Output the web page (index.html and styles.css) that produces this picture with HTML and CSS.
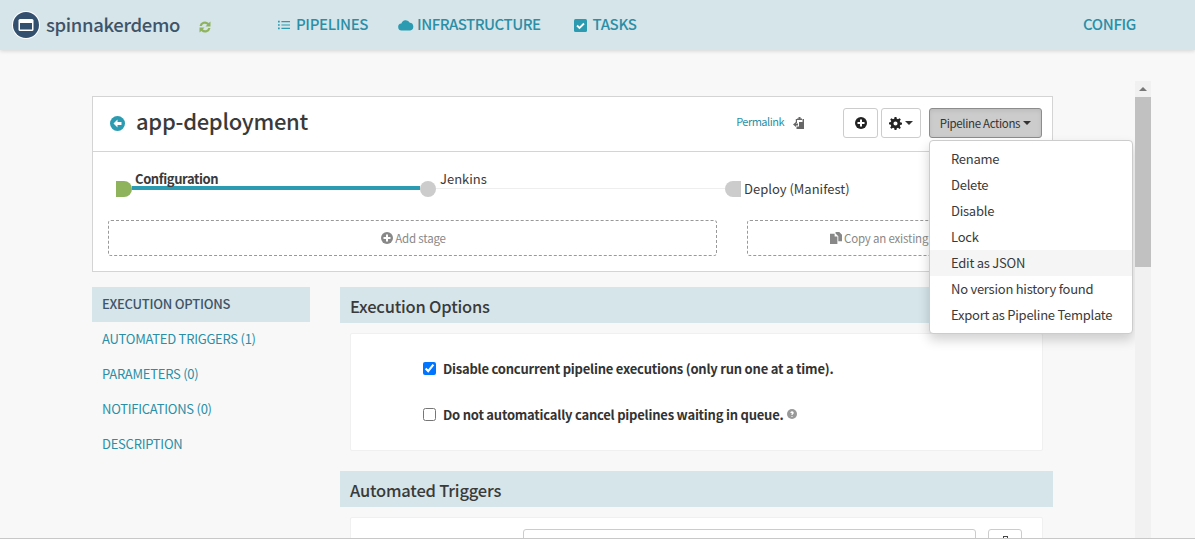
FILE: index.html
```html
<!DOCTYPE html>
<html lang="en">
<head>
    <meta charset="UTF-8">
    <meta name="viewport" content="width=device-width, initial-scale=1.0">
    <title>spinnakerdemo</title>
    <link rel="stylesheet" href="styles.css">
</head>
<body>

    <header class="topbar">
        <div class="brand">
            <span class="brand-logo">
                <svg viewBox="0 0 28 28" width="28" height="28"><circle cx="14" cy="14" r="13" fill="#34506f"/><rect x="6.5" y="8" width="15" height="12" rx="1.5" fill="#fff"/><rect x="8" y="12" width="12" height="6.5" fill="#34506f"/></svg>
            </span>
            <span class="brand-name">spinnakerdemo</span>
            <svg class="brand-sync" viewBox="0 0 14 14" width="14" height="14"><path d="M1.500 6a5.500 5.500 0 0 1 9.200-3L12.500 1.500v5H7.500l1.700-1.700A3.300 3.300 0 0 0 3.700 6zM12.500 8a5.500 5.500 0 0 1-9.200 3L1.500 12.500v-5h5L4.800 9.200A3.300 3.300 0 0 0 10.300 8z" fill="#8fb35c"/></svg>
        </div>
        <nav class="nav">
            <a class="nav-link nav-pipelines">
                <svg viewBox="0 0 14 14" width="12" height="12"><path d="M0 2h2v2H0zM4 2.300h10v1.400H4zM0 6h2v2H0zM4 6.300h10v1.400H4zM0 10h2v2H0zM4 10.300h10v1.400H4z" fill="#2a9bb0"/></svg>
                PIPELINES
            </a>
            <a class="nav-link nav-infra">
                <svg viewBox="0 0 16 12" width="16" height="12"><path d="M4 11.500a3.500 3.500 0 0 1-.6-7A4.500 4.500 0 0 1 11.800 3.800 3.900 3.900 0 0 1 12.200 11.500z" fill="#2a9bb0"/></svg>
                INFRASTRUCTURE
            </a>
            <a class="nav-link nav-tasks">
                <svg viewBox="0 0 13 13" width="13" height="13"><rect width="13" height="13" rx="1.500" fill="#2a9bb0"/><path d="M3 6.500l2.500 2.500L10 4.500" fill="none" stroke="#fff" stroke-width="1.800"/></svg>
                TASKS
            </a>
        </nav>
        <a class="nav-link nav-config">CONFIG</a>
    </header>

    <div class="pane">
        <main class="content">
            <section class="card">
                <div class="card-head">
                    <svg class="back-icon" viewBox="0 0 15 15" width="15" height="15"><circle cx="7.500" cy="7.500" r="7.500" fill="#2a9bb0"/><path d="M7.500 3.500L3.500 7.500l4 4V9h4V6h-4z" fill="#fff"/></svg>
                    <h1 class="pipeline-name">app-deployment</h1>
                    <a class="permalink">Permalink</a>
                    <svg class="clip-icon" viewBox="0 0 12 12" width="12" height="12"><path d="M4 1.500h1.500V0h2v1.500H9V3H4zM3.500 2H2.800v4H4V2zM9.500 2h1.500v10H3.500V9.500H6V5h3.500z" fill="#666"/><path d="M0 7.500L3 5v1.500h2v2H3V10z" fill="#666"/></svg>
                    <button class="btn btn-add">
                        <svg viewBox="0 0 12 12" width="12" height="12"><circle cx="6" cy="6" r="6" fill="#222"/><path d="M5 2.500h2V5h2.500v2H7v2.500H5V7H2.500V5H5z" fill="#fff"/></svg>
                    </button>
                    <button class="btn btn-gear">
                        <svg viewBox="0 0 14 14" width="13" height="13"><path d="M6 0h2l.4 2 1.300.5L11.400 1.400l1.300 1.300-1.100 1.700.5 1.300 2 .4v2l-2 .4-.5 1.300 1.100 1.700-1.300 1.300-1.700-1.100-1.300.5L8 14H6l-.4-2-1.300-.5-1.700 1.100-1.300-1.300 1.100-1.700-.5-1.300-2-.4v-2l2-.4.5-1.300L1.300 2.700l1.300-1.300 1.700 1.100L5.600 2zM7 4.800a2.200 2.200 0 1 0 0 4.400 2.200 2.200 0 0 0 0-4.400z" fill="#222" fill-rule="evenodd"/></svg>
                        <span class="caret"></span>
                    </button>
                    <button class="btn btn-actions">Pipeline Actions <span class="caret"></span></button>
                </div>

                <div class="graph">
                    <span class="link link-active"></span>
                    <span class="link link-idle"></span>
                    <span class="node node-first"></span>
                    <span class="node node-mid"></span>
                    <span class="node node-last"></span>
                    <span class="stage-label stage-config">Configuration</span>
                    <span class="stage-label stage-jenkins">Jenkins</span>
                    <span class="stage-label stage-deploy">Deploy (Manifest)</span>
                </div>

                <div class="stage-tools">
                    <div class="dashed dashed-add">
                        <svg viewBox="0 0 12 12" width="12" height="12"><circle cx="6" cy="6" r="6" fill="#888"/><path d="M5 2.500h2V5h2.500v2H7v2.500H5V7H2.500V5H5z" fill="#fff"/></svg>
                        <span>Add stage</span>
                    </div>
                    <div class="dashed dashed-copy">
                        <svg viewBox="0 0 13 13" width="12" height="12"><path d="M0 2h5v3h3v8H0z" fill="#888"/><path d="M6 0h4l3 3v7H9V4.500L6 1.500z" fill="#888"/></svg>
                        <span>Copy an existing stage</span>
                    </div>
                </div>
            </section>

            <div class="columns">
                <aside class="sidenav">
                    <a class="side-link side-active">EXECUTION OPTIONS</a>
                    <a class="side-link">AUTOMATED TRIGGERS (1)</a>
                    <a class="side-link">PARAMETERS (0)</a>
                    <a class="side-link">NOTIFICATIONS (0)</a>
                    <a class="side-link">DESCRIPTION</a>
                </aside>
                <div class="sections">
                    <h2 class="section-head">Execution Options</h2>
                    <div class="panel panel-options">
                        <label class="option"><input type="checkbox" checked> Disable concurrent pipeline executions (only run one at a time).</label>
                        <label class="option"><input type="checkbox"> Do not automatically cancel pipelines waiting in queue.
                            <svg class="help-icon" viewBox="0 0 10 10" width="10" height="10"><circle cx="5" cy="5" r="5" fill="#999"/><path d="M3.300 3.800a1.700 1.500 0 1 1 2.500 1.400L5.500 6H4.500V4.800l.8-.5-.5-.4-.5.400zM4.500 7h1v1h-1z" fill="#fff"/></svg>
                        </label>
                    </div>
                    <h2 class="section-head section-gap">Automated Triggers</h2>
                    <div class="panel panel-triggers">
                        <div class="trigger-input"></div>
                        <div class="trigger-btn"><span class="trigger-glyph"></span></div>
                    </div>
                </div>
            </div>

            <!-- menu open over the card -->
            <ul class="menu">
                <li>Rename</li>
                <li>Delete</li>
                <li>Disable</li>
                <li>Lock</li>
                <li class="menu-hover">Edit as JSON</li>
                <li>No version history found</li>
                <li>Export as Pipeline Template</li>
            </ul>
        </main>
        <div class="scrollbar">
            <div class="scroll-up"><span class="scroll-arrow"></span></div>
            <div class="scroll-thumb"></div>
        </div>
    </div>

    <div class="bottom-line"></div>

</body>
</html>
```

FILE: styles.css
```css
* {
    box-sizing: border-box;
}
html, body {
    height: 100%;
}
body {
    margin: 0;
    height: 540px;
    overflow: hidden;
    display: flex;
    flex-direction: column;
    background-color: #f8f8f8;
    color: #3a3a3a;
    font-family: "Noto Sans CJK SC", "Noto Sans", sans-serif;
    font-size: 14px;
}

/* top bar */
.topbar {
    flex: none;
    height: 50px;
    display: flex;
    align-items: center;
    background-color: #d5e5ea;
    box-shadow: 0 1px 4px rgba(0, 0, 0, 0.15);
    padding-left: 12px;
}
.brand {
    width: 266px;
    display: flex;
    align-items: center;
}
.brand-logo {
    width: 28px;
    height: 28px;
    border-radius: 50%;
    background-color: #fff;
    display: flex;
}
.brand-name {
    margin-left: 6px;
    margin-bottom: 2px;
    font-size: 18.5px;
    font-weight: 500;
    letter-spacing: -0.35px;
    color: #3f5468;
}
.brand-sync {
    margin-left: 18px;
    margin-top: 3px;
}
.nav {
    display: flex;
    flex: 1;
    gap: 30px;
}
.nav-link {
    display: flex;
    align-items: center;
    gap: 6px;
    font-size: 15px;
    font-weight: 500;
    letter-spacing: -0.35px;
    color: #2a8fa6;
    padding-bottom: 3px;
}
.nav-infra {
    gap: 3px;
    letter-spacing: -0.5px;
}
.nav-tasks {
    margin-left: 3px;
}
.nav-link svg {
    margin-top: 3px;
}
.nav-config {
    margin-right: 59px;
}

/* scrolling area */
.pane {
    flex: 1;
    min-height: 0;
    display: flex;
    padding-top: 31px;
    width: 1151px;
}
.content {
    position: relative;
    flex: 1;
    padding: 15px 82px 0 92px;
    overflow: hidden;
}
.scrollbar {
    width: 16px;
    background-color: #f1f1f1;
}
.scroll-up {
    height: 16px;
    display: flex;
    align-items: center;
    justify-content: center;
}
.scroll-arrow {
    border-bottom: 4px solid #777;
    border-left: 4px solid transparent;
    border-right: 4px solid transparent;
}
.scroll-thumb {
    height: 170px;
    background-color: #c1c1c1;
}
.bottom-line {
    flex: none;
    height: 2px;
    border-top: 1px solid #c8c8c8;
    background-color: #fff;
}

/* pipeline card */
.card {
    height: 176px;
    background-color: #fff;
    border: 1px solid #d4d4d4;
}
.card-head {
    height: 55px;
    display: flex;
    align-items: center;
    padding: 0 0 2px 17px;
    border-bottom: 1px solid #d4d4d4;
}
.pipeline-name {
    margin: 0 0 6px 11px;
    font-size: 22px;
    font-weight: 500;
    letter-spacing: -0.3px;
    flex: 1;
}
.permalink {
    margin-bottom: 4px;
    font-size: 11px;
    letter-spacing: -0.5px;
    color: #2a8fa6;
}
.clip-icon {
    margin-left: 9px;
    margin-right: 38px;
}
.btn {
    height: 30px;
    padding: 0;
    border: 1px solid #ccc;
    border-radius: 3px;
    background-color: #fff;
    font-family: inherit;
    font-size: 11.5px;
    letter-spacing: -0.35px;
    color: #333;
    display: flex;
    align-items: center;
    justify-content: center;
    gap: 3px;
}
.btn-add {
    width: 35px;
}
.btn-gear {
    width: 40px;
    margin-left: 3px;
}
.btn-actions {
    width: 113px;
    margin-left: 8px;
    margin-right: 10px;
    background-color: #ccc;
    border-color: #8c8c8c;
    box-shadow: inset 0 2px 4px rgba(0, 0, 0, 0.08);
}
.caret {
    display: inline-block;
    border-top: 4px solid #333;
    border-left: 4px solid transparent;
    border-right: 4px solid transparent;
}

/* stage graph: nodes sit on a free canvas */
.graph {
    position: relative;
    height: 68px;
}
.node {
    position: absolute;
    top: 29px;
    width: 16px;
    height: 16px;
    background-color: #ccc;
}
.node-first {
    left: 23px;
    background-color: #8fb35c;
    border-radius: 0 8px 8px 0;
}
.node-mid {
    left: 327px;
    border-radius: 50%;
}
.node-last {
    left: 632px;
    border-radius: 8px 0 0 8px;
}
.link {
    position: absolute;
}
.link-active {
    left: 39px;
    width: 288px;
    top: 34px;
    height: 4px;
    background-color: #2a9bb0;
}
.link-idle {
    left: 343px;
    width: 289px;
    top: 36px;
    height: 1px;
    background-color: #eee;
}
.stage-label {
    position: absolute;
    font-size: 13px;
    line-height: 18px;
    white-space: nowrap;
}
.stage-config {
    left: 42px;
    top: 18px;
    font-weight: 700;
    letter-spacing: -0.4px;
}
.stage-jenkins {
    left: 347px;
    top: 18px;
}
.stage-deploy {
    left: 651px;
    top: 28px;
}
.stage-tools {
    display: flex;
    gap: 30px;
    padding-left: 15px;
}
.dashed {
    width: 609px;
    height: 36px;
    padding-bottom: 1px;
    border: 1px dashed #999;
    border-radius: 3px;
    display: flex;
    align-items: center;
    justify-content: center;
    gap: 2px;
    font-size: 11.5px;
    letter-spacing: -0.2px;
    color: #888;
}
.dashed-add {
    padding-left: 2px;
}
.dashed-copy {
    width: 290px;
    padding-left: 4px;
}

/* lower columns */
.columns {
    display: flex;
    margin-top: 15px;
}
.sidenav {
    width: 218px;
    margin-right: 30px;
    display: flex;
    flex-direction: column;
}
.side-link {
    height: 35px;
    padding: 0 0 2px 10px;
    display: flex;
    align-items: center;
    font-size: 13px;
    letter-spacing: -0.25px;
    color: #2a8fa6;
}
.side-active {
    background-color: #d5e5ea;
    color: #3f5468;
    font-weight: 500;
}
.sections {
    flex: 1;
}
.section-head {
    margin: 0;
    height: 36px;
    padding: 1px 0 0 10px;
    display: flex;
    align-items: center;
    background-color: #d5e5ea;
    font-size: 16.5px;
    font-weight: 500;
    letter-spacing: -0.2px;
    color: #3a3a3a;
}
.section-gap {
    margin-top: 20px;
}
.panel {
    margin: 10px 10px 0;
    background-color: #fff;
    border: 1px solid #f0f0f0;
    border-radius: 2px;
}
.panel-options {
    height: 118px;
    padding: 25px 0 0 72px;
    display: flex;
    flex-direction: column;
    gap: 28px;
}
.option {
    height: 18px;
    display: flex;
    align-items: center;
    gap: 7px;
    font-size: 13px;
    font-weight: 700;
    letter-spacing: -0.22px;
    color: #333;
}
.option input {
    margin: 0;
    width: 13px;
    height: 13px;
}
.help-icon {
    margin-left: -4px;
}
.panel-triggers {
    height: 60px;
    display: flex;
    gap: 12px;
    padding: 11px 0 0 172px;
}
.trigger-input {
    width: 453px;
    height: 34px;
    border: 1px solid #ccc;
    border-radius: 3px;
}
.trigger-btn {
    width: 34px;
    height: 34px;
    padding-top: 6px;
    border: 1px solid #ccc;
    border-radius: 3px;
    display: flex;
    justify-content: center;
}
.trigger-glyph {
    width: 5px;
    height: 8px;
    border: 1px solid #444;
}

/* dropdown */
.menu {
    position: absolute;
    left: 929px;
    top: 59px;
    width: 204px;
    margin: 0;
    padding: 5px 0;
    list-style: none;
    background-color: #fff;
    border: 1px solid #ccc;
    border-radius: 4px;
    box-shadow: 0 6px 12px rgba(0, 0, 0, 0.175);
    font-size: 13px;
    letter-spacing: -0.25px;
    color: #3a3a3a;
}
.menu li {
    height: 26px;
    line-height: 25px;
    padding-left: 21px;
    white-space: nowrap;
}
.menu-hover {
    background-color: #f5f5f5;
}
```
